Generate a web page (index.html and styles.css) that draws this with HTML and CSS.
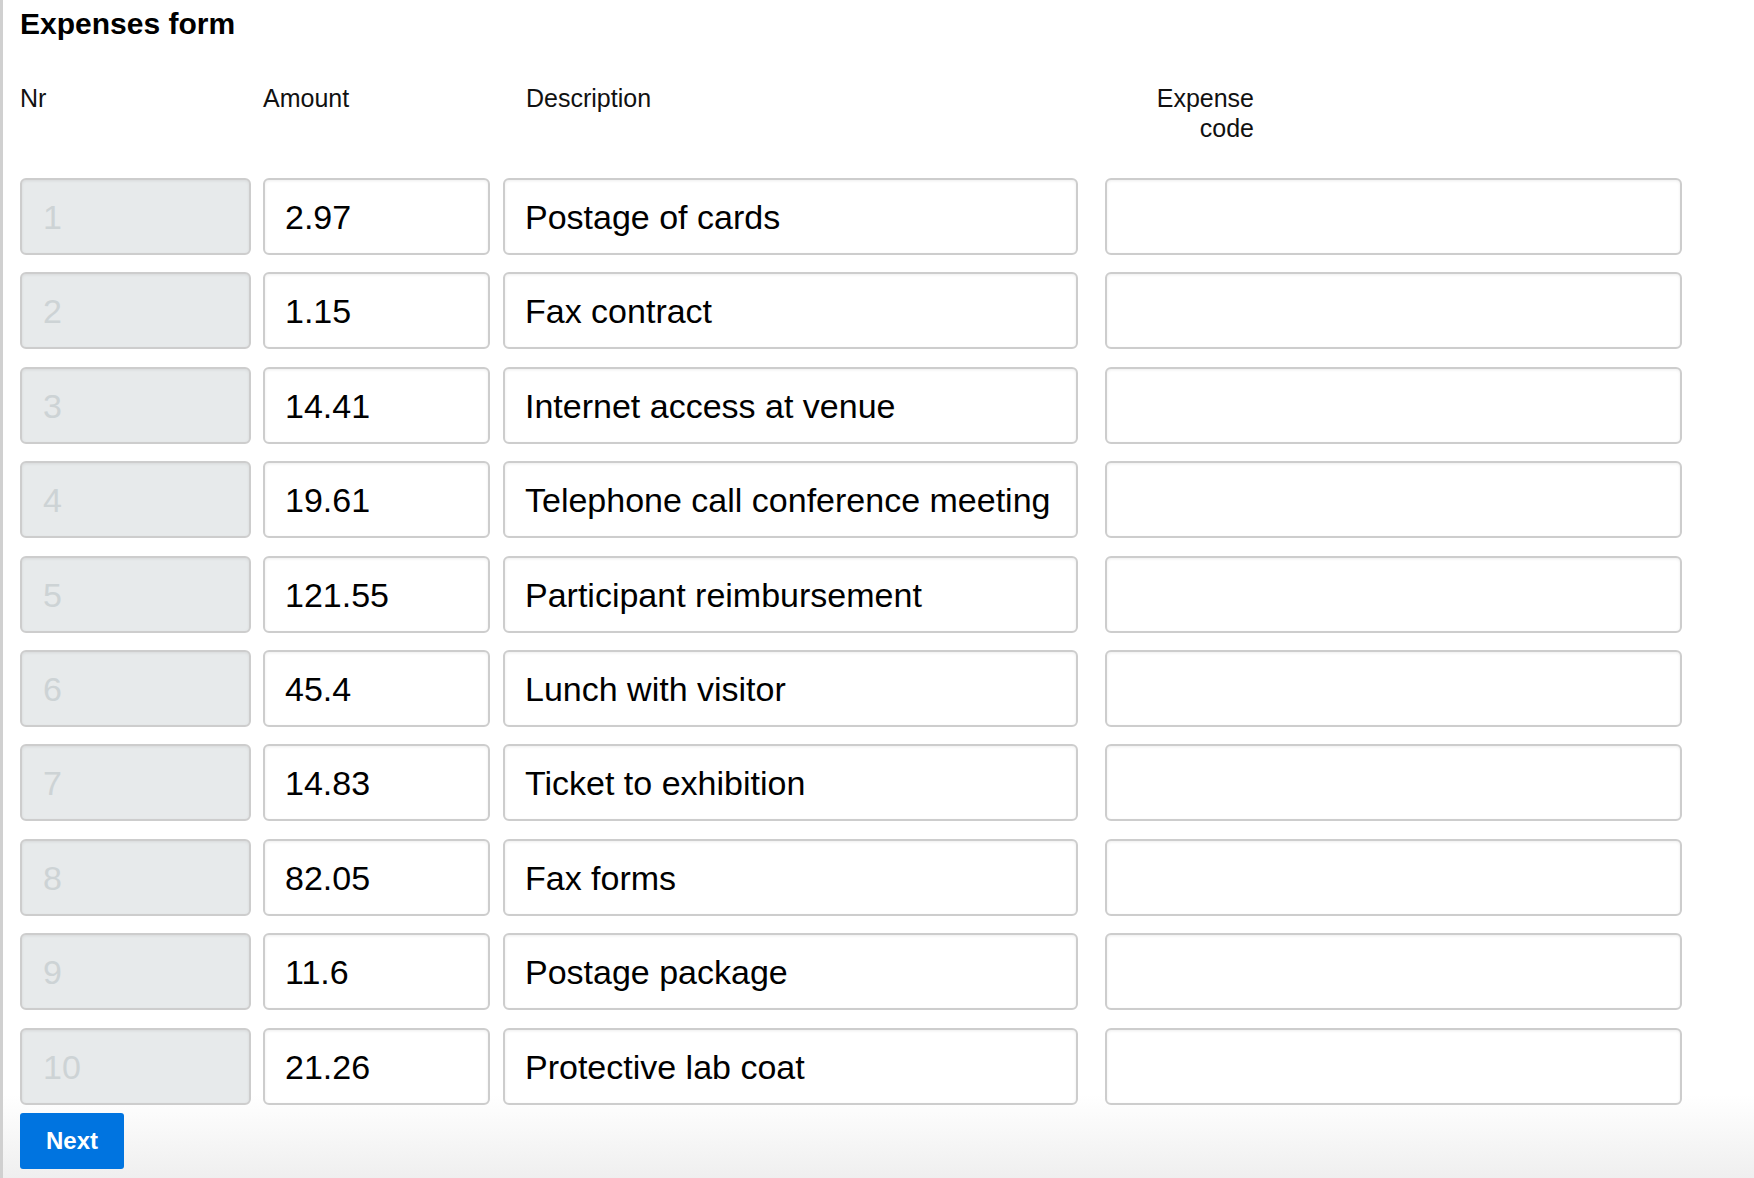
FILE: index.html
```html
<!DOCTYPE html>
<html lang="en">
<head>
<meta charset="utf-8">
<title>Expenses form</title>
<link rel="stylesheet" href="styles.css">
</head>
<body>
<div class="page">
  <h1 class="title">Expenses form</h1>
  <div class="header">
    <div class="hcell c-nr">Nr</div>
    <div class="hcell c-amount">Amount</div>
    <div class="hcell c-desc h-desc">Description</div>
    <div class="hcell h-code">Expense code</div>
  </div>
  <form class="rows">
    <div class="row"><input class="field nr c-nr" value="1" disabled><input class="field c-amount" value="2.97"><input class="field c-desc" value="Postage of cards"><input class="field c-code" value=""></div>
    <div class="row"><input class="field nr c-nr" value="2" disabled><input class="field c-amount" value="1.15"><input class="field c-desc" value="Fax contract"><input class="field c-code" value=""></div>
    <div class="row"><input class="field nr c-nr" value="3" disabled><input class="field c-amount" value="14.41"><input class="field c-desc" value="Internet access at venue"><input class="field c-code" value=""></div>
    <div class="row"><input class="field nr c-nr" value="4" disabled><input class="field c-amount" value="19.61"><input class="field c-desc" value="Telephone call conference meeting"><input class="field c-code" value=""></div>
    <div class="row"><input class="field nr c-nr" value="5" disabled><input class="field c-amount" value="121.55"><input class="field c-desc" value="Participant reimbursement"><input class="field c-code" value=""></div>
    <div class="row"><input class="field nr c-nr" value="6" disabled><input class="field c-amount" value="45.4"><input class="field c-desc" value="Lunch with visitor"><input class="field c-code" value=""></div>
    <div class="row"><input class="field nr c-nr" value="7" disabled><input class="field c-amount" value="14.83"><input class="field c-desc" value="Ticket to exhibition"><input class="field c-code" value=""></div>
    <div class="row"><input class="field nr c-nr" value="8" disabled><input class="field c-amount" value="82.05"><input class="field c-desc" value="Fax forms"><input class="field c-code" value=""></div>
    <div class="row"><input class="field nr c-nr" value="9" disabled><input class="field c-amount" value="11.6"><input class="field c-desc" value="Postage package"><input class="field c-code" value=""></div>
    <div class="row"><input class="field nr c-nr" value="10" disabled><input class="field c-amount" value="21.26"><input class="field c-desc" value="Protective lab coat"><input class="field c-code" value=""></div>
  </form>
  <button class="btn" type="button">Next</button>
</div>
</body>
</html>
```
FILE: styles.css
```css
html, body {
  margin: 0;
  padding: 0;
}
html {
  background: linear-gradient(to bottom, #ffffff 0, #ffffff 1095px, #efefef 1178px);
  min-height: 100%;
}
body {
  font-family: "Liberation Sans", Arial, Helvetica, sans-serif;
  color: #000;
}
.page {
  box-sizing: border-box;
  min-height: 100vh;
  border-left: 3px solid #d0d0d0;
  padding: 6.5px 0 0 17px;
}
.title {
  margin: 0;
  font-size: 30px;
  line-height: 34.5px;
  font-weight: bold;
}
.header {
  display: flex;
  margin-top: 42px;
  height: 60px;
  font-size: 25px;
  line-height: 30px;
  color: #111;
}
.hcell {
  flex: none;
}
.h-desc {
  box-sizing: border-box;
  padding-left: 23px;
}
.h-code {
  width: 149px;
  text-align: right;
}
.rows {
  display: flex;
  flex-direction: column;
  gap: 17.4px;
  margin: 35px 0 0 0;
}
.row {
  display: flex;
}
.c-nr { width: 231px; margin-right: 12px; }
.c-amount { width: 227px; margin-right: 13px; }
.c-desc { width: 575px; margin-right: 27px; }
.c-code { width: 577px; }
.field {
  flex: none;
  box-sizing: border-box;
  height: 77px;
  margin-top: 0;
  margin-bottom: 0;
  margin-left: 0;
  padding: 2px 20px 0 20px;
  border: 2px solid #cdcdcd;
  border-radius: 6px;
  background: #fff;
  box-shadow: inset 0 1px 3px rgba(0, 0, 0, 0.07);
  font-family: "Liberation Sans", Arial, Helvetica, sans-serif;
  font-size: 34px;
  color: #000;
  outline: none;
}
.field.nr {
  background: #e7eaeb;
  color: #cdd3d5;
  -webkit-text-fill-color: #cdd3d5;
  opacity: 1;
  padding-left: 21px;
}
.btn {
  display: block;
  margin-top: 8px;
  width: 104px;
  height: 56px;
  padding: 0;
  border: none;
  border-radius: 3px;
  background: #0074e0;
  color: #fff;
  font-family: "Liberation Sans", Arial, Helvetica, sans-serif;
  font-size: 24px;
  font-weight: bold;
}
```
